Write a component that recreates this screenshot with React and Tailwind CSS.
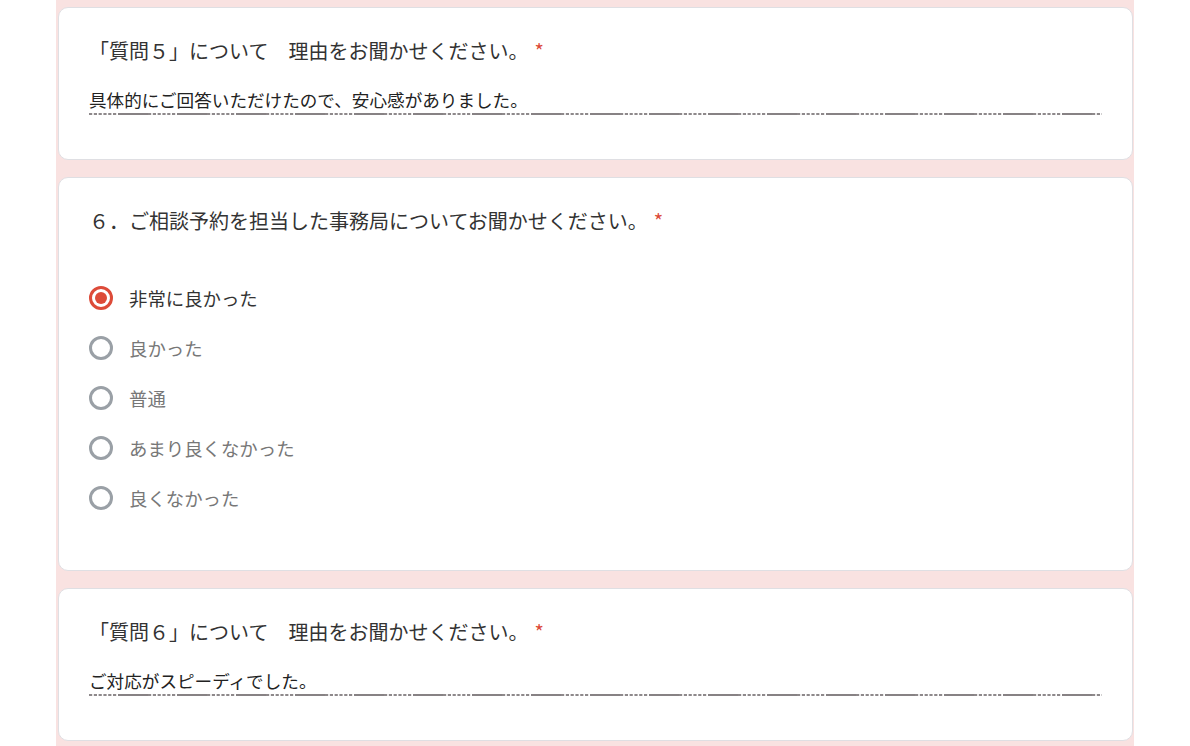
import React from "react";

const font = { fontFamily: '"Noto Sans CJK JP", "Noto Sans", sans-serif' };

function DashLine() {
	// 入力欄の下線（実線と破線の繰り返し）
	return (
		<svg className="block w-full h-[2px] mt-[1px]" preserveAspectRatio="none">
			<defs>
				<pattern id="dl" x="0" y="0" width="59" height="2" patternUnits="userSpaceOnUse">
					<rect x="0" y="0" width="3.2" height="2" fill="#8e898b" />
					<rect x="4.8" y="0" width="3.2" height="2" fill="#8e898b" />
					<rect x="9.6" y="0" width="3.2" height="2" fill="#8e898b" />
					<rect x="14.4" y="0" width="3.2" height="2" fill="#8e898b" />
					<rect x="19.2" y="0" width="3.2" height="2" fill="#8e898b" />
					<rect x="24" y="0" width="3.2" height="2" fill="#8e898b" />
					<rect x="29" y="0" width="30" height="2" fill="#878284" />
				</pattern>
			</defs>
			<rect x="0" y="0" width="100%" height="2" fill="url(#dl)" />
		</svg>
	);
}

function Title({ children }) {
	return (
		<div className="flex items-center text-[20px] leading-[24px] text-[#333333]">
			<span>{children}</span>
			<span className="ml-[6px] text-[#dc4a38]">*</span>
		</div>
	);
}

function TextCard({ title, answer }) {
	return (
		<div className="bg-white border border-[#dfdfe3] rounded-[10px] pt-[31px] px-[30px] pb-[44px]">
			<Title>{title}</Title>
			<div className="mt-[25px] text-[17.6px] leading-[24px] text-[#222222]">{answer}</div>
			<DashLine />
		</div>
	);
}

function Radio({ checked, label }) {
	return (
		<div className="flex items-center h-[24px]">
			{checked ? (
				<div className="w-[24px] h-[24px] rounded-full border-[3px] border-[#dd4b39] flex items-center justify-center">
					<div className="w-[12px] h-[12px] rounded-full bg-[#dd4b39]" />
				</div>
			) : (
				<div className="w-[24px] h-[24px] rounded-full border-[3px] border-[#9aa0a6]" />
			)}
			<span
				className={
					"ml-[16px] text-[18.4px] leading-[24px] " +
					(checked ? "text-[#333333]" : "text-[#777777]")
				}
			>
				{label}
			</span>
		</div>
	);
}

export default function App() {
	const options = ["非常に良かった", "良かった", "普通", "あまり良くなかった", "良くなかった"];

	return (
		<div className="w-full min-h-[746px] bg-white" style={font}>
			<div className="mx-auto w-[1078px] min-h-[746px] bg-[#f9e2e1] pt-[7px] pl-[2px] pr-[1px] flex flex-col gap-[17px]">
				<TextCard
					title="「質問５」について　理由をお聞かせください。"
					answer="具体的にご回答いただけたので、安心感がありました。"
				/>

				<div className="bg-white border border-[#dfdfe3] rounded-[10px] pt-[31px] px-[30px] pb-[60px]">
					<Title>６．ご相談予約を担当した事務局についてお聞かせください。</Title>
					<div className="mt-[53px] flex flex-col gap-[26px]">
						{options.map((o, i) => (
							<Radio key={o} checked={i === 0} label={o} />
						))}
					</div>
				</div>

				<TextCard
					title="「質問６」について　理由をお聞かせください。"
					answer="ご対応がスピーディでした。"
				/>
			</div>
		</div>
	);
}
